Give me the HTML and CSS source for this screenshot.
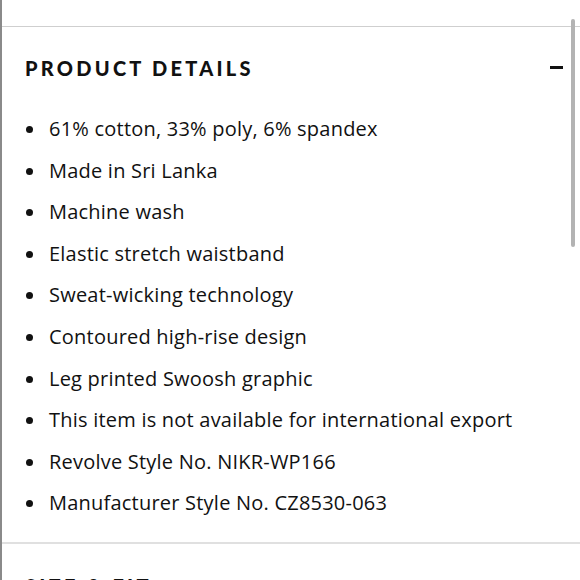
FILE: index.html
```html
<!DOCTYPE html>
<html>
<head>
<meta charset="utf-8">
<link rel="stylesheet" href="styles.css">
</head>
<body>
<div class="frame">
  <div class="top-space"></div>
  <section class="panel">
    <div class="panel-head">
      <h2 class="panel-title">PRODUCT DETAILS</h2>
      <span class="minus"></span>
    </div>
    <ul class="details">
      <li>61% cotton, 33% poly, 6% spandex</li>
      <li>Made in Sri Lanka</li>
      <li>Machine wash</li>
      <li>Elastic stretch waistband</li>
      <li>Sweat-wicking technology</li>
      <li>Contoured high-rise design</li>
      <li>Leg printed Swoosh graphic</li>
      <li>This item is not available for international export</li>
      <li>Revolve Style No. NIKR-WP166</li>
      <li>Manufacturer Style No. CZ8530-063</li>
    </ul>
  </section>
  <section class="panel next-panel">
    <div class="panel-head next">
      <h2 class="panel-title">SIZE &amp; FIT</h2>
      <svg class="chev" width="12" height="14" viewBox="0 0 12 14"><path d="M3 1 L9 7 L3 13" fill="none" stroke="#111" stroke-width="2"/></svg>
    </div>
  </section>
  <div class="scrollbar"></div>
</div>
</body>
</html>
```
FILE: styles.css
```css
html, body {
  margin: 0;
  padding: 0;
  background: #fff;
}
body {
  width: 580px;
  height: 580px;
  overflow: hidden;
}
.frame {
  position: relative;
  height: 580px;
  overflow: hidden;
  border-left: 2px solid #8a8a8a;
  box-sizing: border-box;
  font-family: "Open Sans", "Liberation Sans", sans-serif;
  color: #111;
}
.top-space {
  height: 26px;
}
.panel {
  border-top: 1.5px solid #cfcfcf;
}
.next-panel {
  border-top: 2px solid #e0e0e0;
}
.panel-head {
  display: flex;
  justify-content: space-between;
  align-items: center;
  height: 81px;
  padding: 0 17px 0 23px;
}
.panel-head.next {
  height: auto;
  align-items: flex-start;
  padding-top: 32px;
  padding-right: 14px;
}
.panel-title {
  margin: 0;
  font-family: "Lato", "Liberation Sans", sans-serif;
  font-weight: 900;
  font-size: 20px;
  line-height: 20px;
  letter-spacing: 3.25px;
  color: #111;
}
.chev {
  margin-top: 4px;
}
.minus {
  width: 13px;
  height: 3px;
  background: #111;
}
.details {
  list-style: none;
  margin: 0;
  padding: 0 0 18px 25px;
}
.details li {
  position: relative;
  padding-left: 22px;
  height: 41.6px;
  line-height: 41.6px;
  font-size: 20px;
  letter-spacing: 0.22px;
}
.details li::before {
  content: "";
  position: absolute;
  left: -1px;
  top: 18px;
  width: 7px;
  height: 7px;
  border-radius: 50%;
  background: #111;
}
.scrollbar {
  position: absolute;
  right: 5px;
  top: 19px;
  width: 4px;
  height: 228px;
  border-radius: 2px;
  background: #b3b3b3;
}
```
